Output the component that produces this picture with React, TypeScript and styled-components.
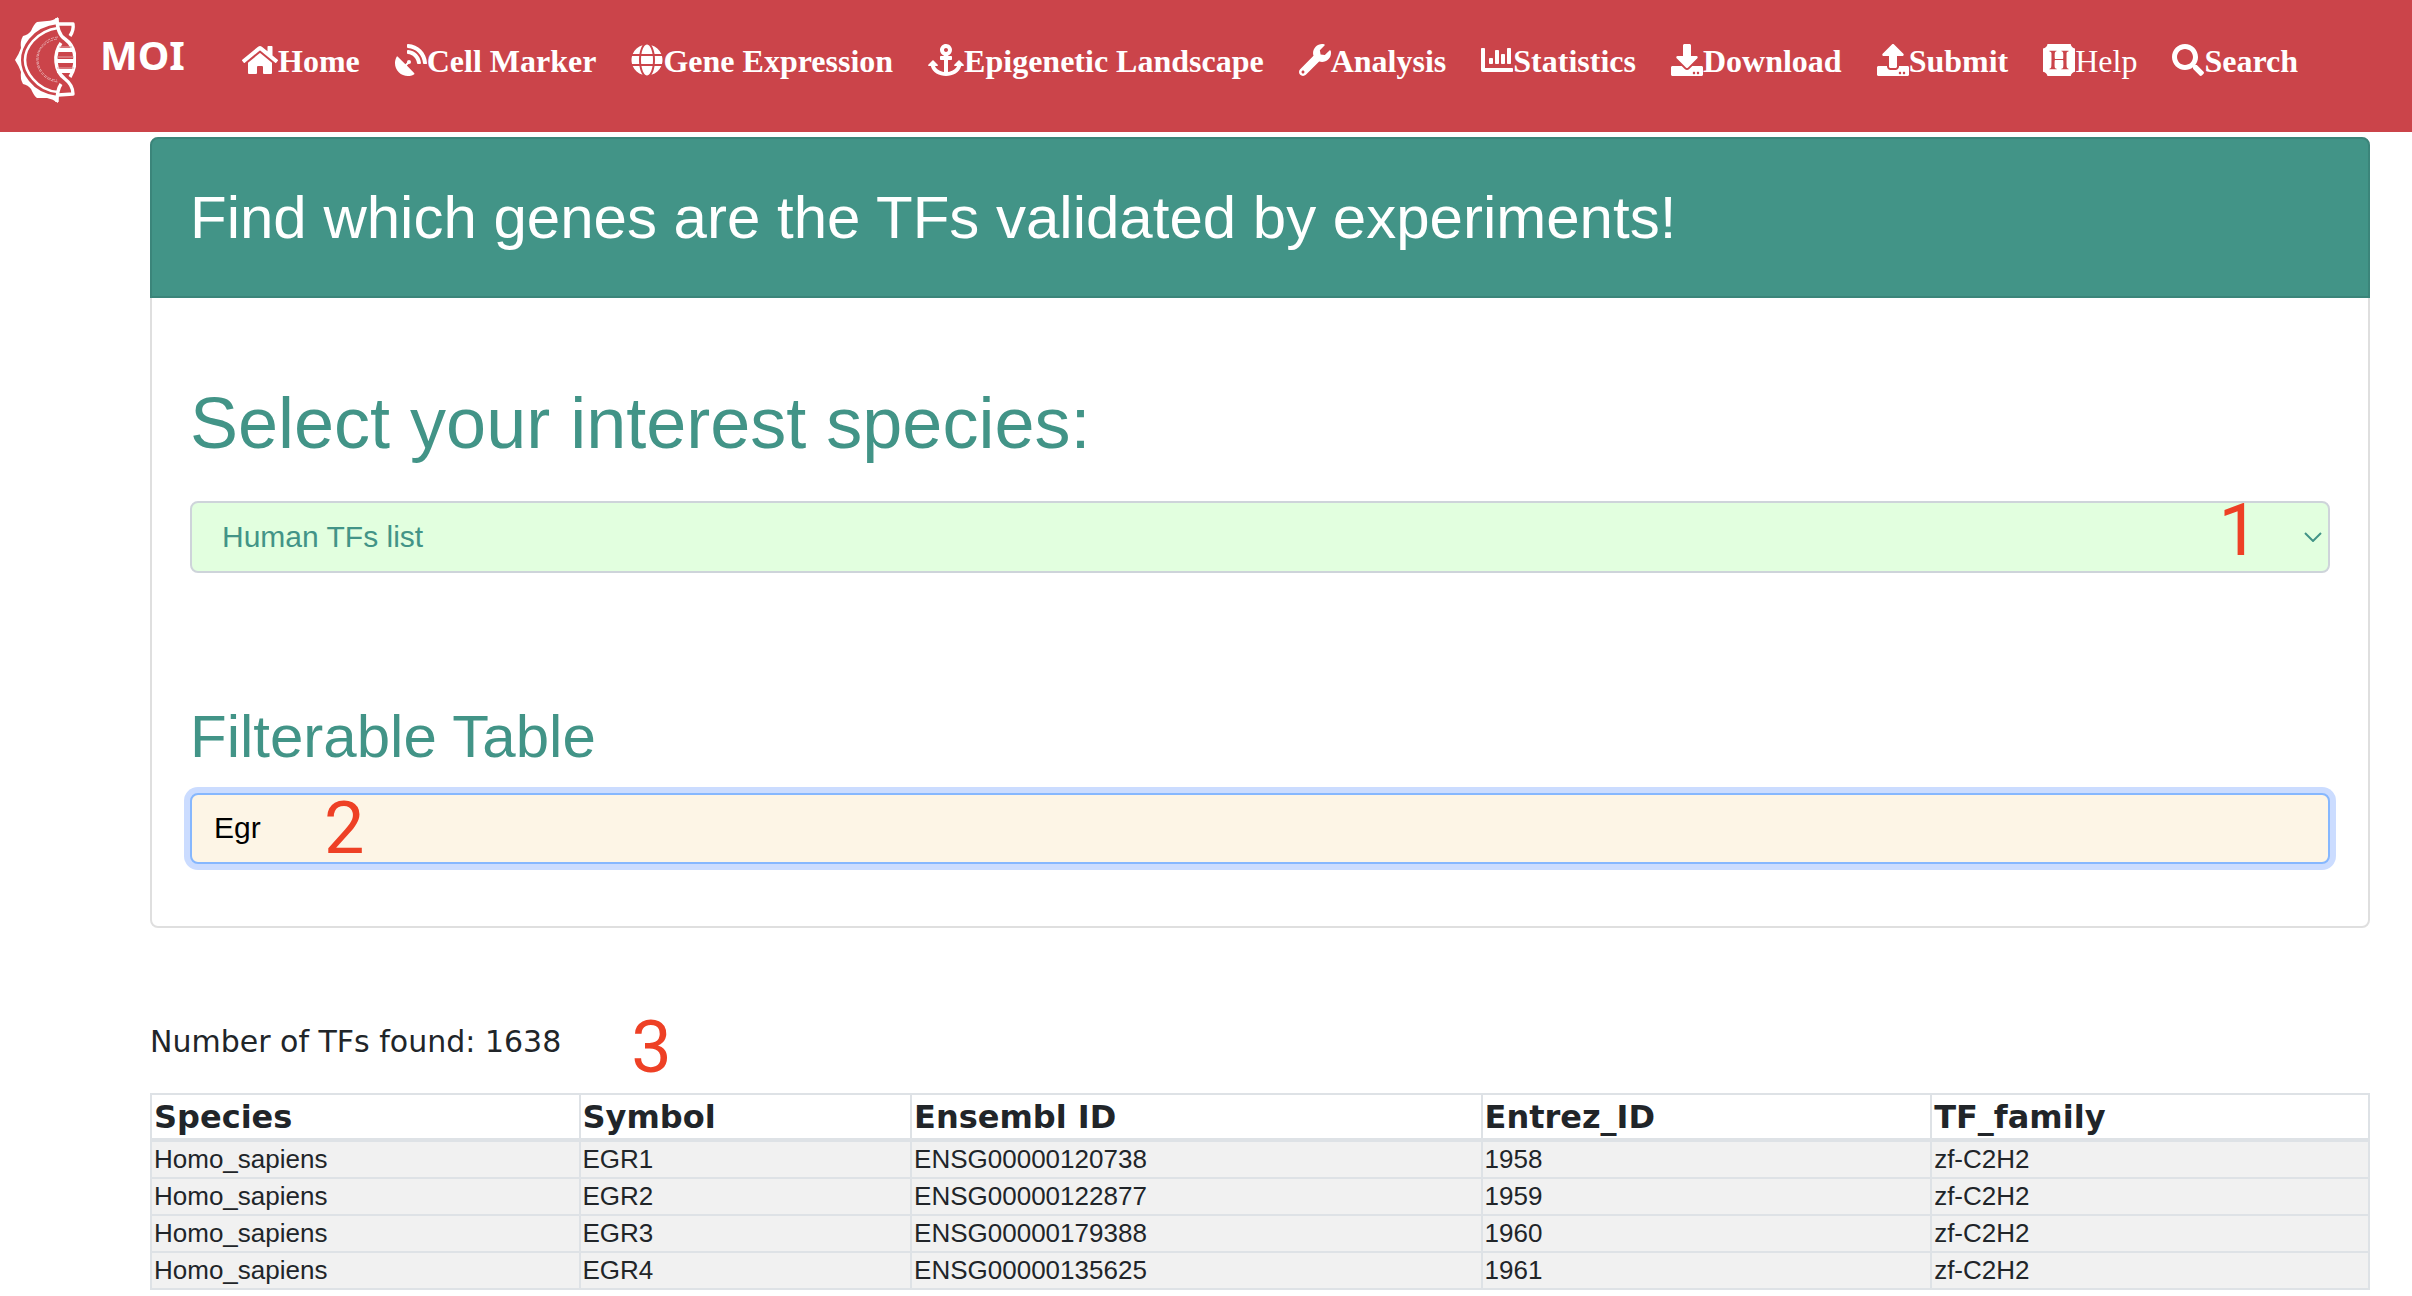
import React, { useState } from "react";
import styled, { createGlobalStyle } from "styled-components";
import {
  FaHome,
  FaSatelliteDish,
  FaGlobe,
  FaAnchor,
  FaWrench,
  FaChartBar,
  FaDownload,
  FaUpload,
  FaHireAHelper,
  FaSearch,
} from "react-icons/fa";

const sans = `"Liberation Sans", Arial, sans-serif`;
const verdana = `Verdana, "DejaVu Sans", sans-serif`;
const teal = "#429487";

const GlobalStyle = createGlobalStyle`
  *, *::before, *::after { box-sizing: border-box; }
  body {
    margin: 0;
    background: #fff;
    color: #212529;
    font-family: ${verdana};
  }
`;

const Navbar = styled.nav`
  display: flex;
  align-items: flex-start;
  height: 132px;
  padding: 16px 14px;
  background: #cb444a;
`;

const Brand = styled.a`
  display: flex;
  gap: 24px;
  width: 228px;
  color: #fff;
  text-decoration: none;
`;

const BrandName = styled.span`
  font: bold 40px/78px "Noto Sans", ${verdana};
`;

const NavList = styled.ul`
  display: flex;
  gap: 35px;
  margin: 0;
  padding: 0;
  list-style: none;
`;

const NavLink = styled.a<{ $light?: boolean; $wide?: boolean }>`
  display: flex;
  align-items: center;
  height: 88px;
  color: #fff;
  font: ${(p) => (p.$light ? "normal" : "bold")} 32px/40px "Liberation Serif", "Times New Roman", serif;
  text-decoration: none;
  white-space: nowrap;

  svg {
    flex: none;
    width: ${(p) => (p.$wide ? 36 : 32)}px;
    height: 32px;
  }
`;

const NavText = styled.span`
  padding-top: 2px;
`;

const Content = styled.main`
  padding: 5px 42px 0 150px;
`;

const Card = styled.section`
  border: 2px solid #dfdfdf;
  border-radius: 8px;
`;

const CardHeader = styled.header`
  margin: -2px -2px 0;
  padding: 38px;
  border: 2px solid #3b857a;
  border-radius: 8px 8px 0 0;
  background: ${teal};
`;

const CardTitle = styled.h2`
  margin: 0;
  color: #fff;
  font: normal 60px/81px ${sans};
`;

const CardBody = styled.div`
  padding: 80px 38px 62px;
`;

const FieldLabel = styled.label<{ $large?: boolean }>`
  display: block;
  color: ${teal};
  font: normal ${(p) => (p.$large ? "72px/90px" : "60px/72px")} ${sans};
`;

const Field = styled.div<{ $gap: number }>`
  position: relative;
  margin-top: ${(p) => p.$gap}px;
`;

const Select = styled.select`
  display: block;
  width: 100%;
  height: 72px;
  padding: 0 30px 2px;
  appearance: none;
  border: 2px solid #ced4da;
  border-radius: 8px;
  background: #e2ffdf;
  color: ${teal};
  font: 30px ${sans};
`;

const Chevron = styled.svg`
  position: absolute;
  top: 31px;
  right: 8px;
  width: 18px;
  height: 10px;
  pointer-events: none;
`;

const FilterGroup = styled.div`
  margin-top: 128px;
`;

const Input = styled.input`
  display: block;
  width: 100%;
  height: 71px;
  padding: 0 22px 2px;
  border: 2px solid #86b7fe;
  border-radius: 8px;
  outline: none;
  background: #fdf5e6;
  box-shadow: 0 0 0 6px #cbdcff;
  color: #000;
  font: 30px ${sans};
`;

const Marker = styled.span`
  color: #ee4025;
  font: 72px/72px Roboto, ${sans};
`;

const SelectMarker = styled(Marker)`
  position: absolute;
  top: -6px;
  right: 71px;
`;

const InputMarker = styled(Marker)`
  position: absolute;
  top: 0;
  left: 134px;
`;

const Summary = styled.p`
  display: flex;
  align-items: flex-start;
  gap: 70px;
  margin: 84px 0 9px;
  font: 30px/60px ${verdana};
`;

const Table = styled.table`
  width: 100%;
  border-collapse: collapse;
  table-layout: fixed;
  text-align: left;
`;

const HeadCell = styled.th`
  height: 46px;
  padding: 0 2px;
  border: 2px solid #dee2e6;
  border-bottom-width: 4px;
  font: bold 32px/40px ${verdana};
`;

const Cell = styled.td`
  height: 37px;
  padding: 0 2px;
  border: 2px solid #dee2e6;
  background: #f1f1f1;
  font: 26px/35px ${sans};
`;

const navItems = [
  { label: "Home", Icon: FaHome, wide: true },
  { label: "Cell Marker", Icon: FaSatelliteDish },
  { label: "Gene Expression", Icon: FaGlobe },
  { label: "Epigenetic Landscape", Icon: FaAnchor, wide: true },
  { label: "Analysis", Icon: FaWrench },
  { label: "Statistics", Icon: FaChartBar },
  { label: "Download", Icon: FaDownload },
  { label: "Submit", Icon: FaUpload },
  { label: "Help", Icon: FaHireAHelper, light: true },
  { label: "Search", Icon: FaSearch },
];

const columns = [
  { name: "Species", width: "19.32%" },
  { name: "Symbol", width: "14.95%" },
  { name: "Ensembl ID", width: "25.72%" },
  { name: "Entrez_ID", width: "20.27%" },
  { name: "TF_family", width: "19.74%" },
];

const rows = [
  ["Homo_sapiens", "EGR1", "ENSG00000120738", "1958", "zf-C2H2"],
  ["Homo_sapiens", "EGR2", "ENSG00000122877", "1959", "zf-C2H2"],
  ["Homo_sapiens", "EGR3", "ENSG00000179388", "1960", "zf-C2H2"],
  ["Homo_sapiens", "EGR4", "ENSG00000135625", "1961", "zf-C2H2"],
];

const Logo = () => (
  <svg width="62" height="88" viewBox="14 16 62 88" fill="none" stroke="#fff" aria-hidden="true">
    <path
      fill="#fff"
      stroke="none"
      d="M58 17 Q53 21 47 21 L37 22 Q34 24 31 31 Q28 35 23 36 Q20 41 21 48 Q19 54 15 60 Q19 66 21 72 Q20 79 23 84 Q28 85 31 89 Q34 96 37 98 L47 98 Q53 99 58 103 V96 Q39 94 29 81 Q21 71 21 60 Q21 49 29 39 Q39 26 58 24 Z"
    />
    <path strokeWidth="2.6" d="M58 28 Q43 30 33 41 Q25 50 25 60 Q25 70 33 79 Q43 91 58 92" />
    <g strokeWidth="1" stroke="#e5a6a9" strokeDasharray="3 1">
      <path d="M58 37 Q47 38 41 47 Q36 54 37 61 Q37 68 42 74 Q48 81 58 82" />
      <path d="M57 39 Q46 41 40 50 Q38 55 38 60 Q38 67 43 73 Q49 80 57 80" />
    </g>
    <g strokeWidth="3.4" strokeLinejoin="round">
      <path d="M57 18 Q57 34 65 39 Q75 46 75 60 Q75 69 70 77" />
      <path d="M61 43 Q55 51 56 62 Q57 73 65 79 Q73 85 73 94 L58 95" />
      <path d="M58 24 H73 Q74 30 70 36" />
      <path d="M61 84 Q57 90 57 102" />
    </g>
    <path strokeWidth="4" d="M57 50 H73 M55 61 H75 M57 71 H73" />
    <path strokeWidth="1" stroke="#e5a6a9" d="M59 47 H72 M57 57 H74 M57 68 H74" />
  </svg>
);

export default function App() {
  const [species, setSpecies] = useState("human");
  const [filter, setFilter] = useState("Egr");
  const visible = rows.filter((r) => r.join(" ").toLowerCase().includes(filter.toLowerCase()));

  return (
    <>
      <GlobalStyle />
      <Navbar>
        <Brand href="#">
          <Logo />
          <BrandName>MOI</BrandName>
        </Brand>
        <NavList>
          {navItems.map(({ label, Icon, light, wide }) => (
            <li key={label}>
              <NavLink href="#" $light={light} $wide={wide}>
                <Icon aria-hidden="true" />
                <NavText>{label}</NavText>
              </NavLink>
            </li>
          ))}
        </NavList>
      </Navbar>
      <Content>
        <Card>
          <CardHeader>
            <CardTitle>Find which genes are the TFs validated by experiments!</CardTitle>
          </CardHeader>
          <CardBody>
            <FieldLabel htmlFor="species" $large>
              Select your interest species:
            </FieldLabel>
            <Field $gap={33}>
              <Select id="species" value={species} onChange={(e) => setSpecies(e.target.value)}>
                <option value="human">Human TFs list</option>
                <option value="mouse">Mouse TFs list</option>
              </Select>
              <SelectMarker>1</SelectMarker>
              <Chevron viewBox="0 0 18 10" fill="none" stroke={teal} strokeWidth="2">
                <path d="M1 1 L9 9 L17 1" />
              </Chevron>
            </Field>
            <FilterGroup>
              <FieldLabel htmlFor="filter">Filterable Table</FieldLabel>
              <Field $gap={20}>
                <Input id="filter" type="text" value={filter} onChange={(e) => setFilter(e.target.value)} />
                <InputMarker>2</InputMarker>
              </Field>
            </FilterGroup>
          </CardBody>
        </Card>
        <Summary>
          Number of TFs found: 1638
          <Marker>3</Marker>
        </Summary>
        <Table>
          <colgroup>
            {columns.map((c) => (
              <col key={c.name} width={c.width} />
            ))}
          </colgroup>
          <thead>
            <tr>
              {columns.map((c) => (
                <HeadCell key={c.name} scope="col">
                  {c.name}
                </HeadCell>
              ))}
            </tr>
          </thead>
          <tbody>
            {visible.map((row) => (
              <tr key={row[1]}>
                {row.map((value) => (
                  <Cell key={value}>{value}</Cell>
                ))}
              </tr>
            ))}
          </tbody>
        </Table>
      </Content>
    </>
  );
}
